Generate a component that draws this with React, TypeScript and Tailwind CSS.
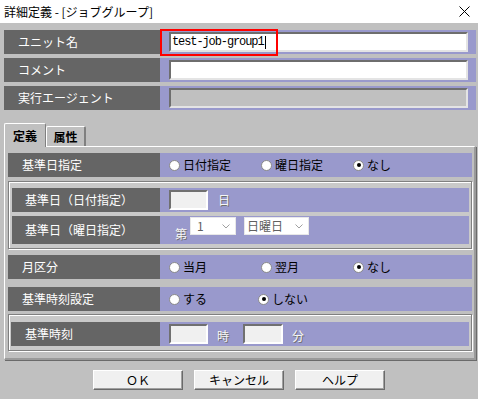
import React from "react";

const Radio = ({ checked }: { checked?: boolean }) => (
  <span className="w-[11px] h-[11px] rounded-full bg-white border border-[#8a8a8a] flex items-center justify-center shrink-0">
    {checked && <span className="w-[4px] h-[4px] rounded-full bg-black" />}
  </span>
);

const Opt = ({ label, checked, w }: { label: string; checked?: boolean; w: string }) => (
  <div className={`flex items-center gap-[3px] ${w}`}>
    <Radio checked={checked} />
    <span className="text-[12px] text-black leading-none">{label}</span>
  </div>
);

const Etched = ({ children }: { children: React.ReactNode }) => (
  <span className="text-[12px] leading-none text-[#f6f6f6] [text-shadow:1px_1px_0_#6f6f6f]">{children}</span>
);

const SmallInput = ({ w }: { w: string }) => (
  <div className={`${w} h-[20px] bg-[#f0f0f0] border-2 border-t-[#707070] border-l-[#707070] border-r-white border-b-white`} />
);

const Chevron = () => (
  <svg width="8" height="5" viewBox="0 0 8 5" className="shrink-0">
    <path d="M0.5 0.5 L4 4 L7.5 0.5" fill="none" stroke="#a0a0a0" strokeWidth="1" />
  </svg>
);

export default function App() {
  return (
    <div className="w-[478px] h-[399px] bg-[#c0c0c0] overflow-hidden font-['Noto_Sans_CJK_JP',sans-serif] select-none">
      {/* title bar */}
      <div className="h-[23px] bg-white flex items-center justify-between pl-[4px] pr-[8px]">
        <span className="text-[12px] text-black leading-none">詳細定義 - [ジョブグループ]</span>
        <svg width="11" height="11" viewBox="0 0 11 11">
          <path d="M0.5 0.5 L10.5 10.5 M10.5 0.5 L0.5 10.5" stroke="#000" strokeWidth="1" />
        </svg>
      </div>

      <div className="pl-[4px] pr-[2px] pt-[7px]">
        {/* top rows */}
        <div className="flex flex-col gap-[4px]">
          <div className="flex h-[24px] relative">
            <div className="w-[156px] bg-[#656565] flex items-center pl-[14px] text-white text-[12px]">ユニット名</div>
            <div className="flex-1 bg-[#9999cc] flex items-center pl-[9px] pr-[8px]">
              <div className="flex-1 h-[20px] bg-white border-2 border-t-[#6e6e6e] border-l-[#6e6e6e] border-r-[#e4e4e4] border-b-[#e4e4e4] flex items-center pl-[1px]">
                <span className="font-['Liberation_Mono',monospace] text-[12px] tracking-[-1.1px] text-black leading-none">test-job-group1</span>
                <span className="w-[1px] h-[13px] bg-black ml-[1px]" />
              </div>
            </div>
            <div className="absolute left-[156px] top-[-1px] w-[118px] h-[27px] border-2 border-[#ff0000]" />
          </div>
          <div className="flex h-[24px]">
            <div className="w-[156px] bg-[#656565] flex items-center pl-[14px] text-white text-[12px]">コメント</div>
            <div className="flex-1 bg-[#9999cc] flex items-center pl-[9px] pr-[8px]">
              <div className="flex-1 h-[20px] bg-white border-2 border-t-[#6e6e6e] border-l-[#6e6e6e] border-r-[#e4e4e4] border-b-[#e4e4e4]" />
            </div>
          </div>
          <div className="flex h-[24px]">
            <div className="w-[156px] bg-[#656565] flex items-center pl-[14px] text-white text-[12px]">実行エージェント</div>
            <div className="flex-1 bg-[#9999cc] flex items-center pl-[9px] pr-[8px]">
              <div className="flex-1 h-[20px] bg-[#c0c0c0] border-2 border-t-[#6e6e6e] border-l-[#6e6e6e] border-r-[#e4e4e4] border-b-[#e4e4e4]" />
            </div>
          </div>
        </div>

        {/* tabs */}
        <div className="flex items-end mt-[13px] h-[23px] relative z-10">
          <div className="w-[42px] h-[24px] mb-[-1px] bg-[#c0c0c0] border-t border-l border-white border-r border-r-[#808080] rounded-t-[2px] flex items-center justify-center text-[12px] font-bold text-black">
            定義
          </div>
          <div className="w-[40px] h-[20px] bg-[#c0c0c0] border-t border-l border-white border-r-2 border-r-[#808080] rounded-t-[2px] flex items-center justify-center text-[12px] font-bold text-black">
            属性
          </div>
        </div>

        {/* panel */}
        <div className="w-[472px] border-t border-l border-white border-r-2 border-b-2 border-r-[#9a9a9a] border-b-[#9a9a9a] shadow-[1px_1px_0_#6a6a6a] pl-[3px] pr-[2px] pt-[6px] pb-[7px] flex flex-col">
          {/* 基準日指定 */}
          <div className="flex h-[24px]">
            <div className="w-[152px] bg-[#656565] flex items-center pl-[14px] text-white text-[12px]">基準日指定</div>
            <div className="flex-1 bg-[#9999cc] flex items-center pl-[9px]">
              <Opt label="日付指定" w="w-[92px]" />
              <Opt label="曜日指定" w="w-[92px]" />
              <Opt label="なし" checked w="w-[60px]" />
            </div>
          </div>

          {/* group box 1 */}
          <div className="mt-[4px] bg-[#c9c9c9] border border-[#808080] shadow-[inset_1px_1px_0_#ffffff,1px_1px_0_#ffffff] pl-[3px] pr-[2px] pt-[6px] pb-[4px] flex flex-col gap-[4px]">
            <div className="flex h-[24px]">
              <div className="w-[148px] bg-[#656565] flex items-center pl-[13px] text-white text-[12px]">基準日（日付指定）</div>
              <div className="flex-1 bg-[#9999cc] flex items-center pl-[9px] gap-[10px]">
                <SmallInput w="w-[39px]" />
                <Etched>日</Etched>
              </div>
            </div>
            <div className="flex h-[28px]">
              <div className="w-[148px] bg-[#656565] flex items-center pl-[13px] text-white text-[12px]">基準日（曜日指定）</div>
              <div className="flex-1 bg-[#9999cc] flex items-start pl-[15px] pt-[1px]">
                <div className="mt-[7px] mr-[3px] leading-none">
                  <Etched>第</Etched>
                </div>
                <div className="w-[46px] h-[18px] bg-white border border-[#e8e8e8] flex items-center justify-between pl-[6px] pr-[5px]">
                  <span className="text-[12px] leading-none text-[#606060]">1</span>
                  <Chevron />
                </div>
                <div className="ml-[8px] w-[65px] h-[18px] bg-white border border-[#e8e8e8] flex items-center justify-between pl-[2px] pr-[5px]">
                  <span className="text-[12px] leading-none text-[#606060]">日曜日</span>
                  <Chevron />
                </div>
              </div>
            </div>
          </div>

          {/* 月区分 */}
          <div className="flex h-[24px] mt-[6px]">
            <div className="w-[152px] bg-[#656565] flex items-center pl-[14px] text-white text-[12px]">月区分</div>
            <div className="flex-1 bg-[#9999cc] flex items-center pl-[9px]">
              <Opt label="当月" w="w-[92px]" />
              <Opt label="翌月" w="w-[92px]" />
              <Opt label="なし" checked w="w-[60px]" />
            </div>
          </div>

          {/* 基準時刻設定 */}
          <div className="flex h-[24px] mt-[8px]">
            <div className="w-[152px] bg-[#656565] flex items-center pl-[14px] text-white text-[12px]">基準時刻設定</div>
            <div className="flex-1 bg-[#9999cc] flex items-center pl-[9px]">
              <Opt label="する" w="w-[89px]" />
              <Opt label="しない" checked w="w-[80px]" />
            </div>
          </div>

          {/* group box 2 */}
          <div className="mt-[3px] bg-[#c9c9c9] border border-[#808080] shadow-[inset_1px_1px_0_#ffffff,1px_1px_0_#ffffff] pl-[2px] pr-[2px] pt-[7px] pb-[4px] flex flex-col">
            <div className="flex h-[24px]">
              <div className="w-[149px] bg-[#656565] flex items-center pl-[14px] text-white text-[12px]">基準時刻</div>
              <div className="flex-1 bg-[#9999cc] flex items-center pl-[9px]">
                <SmallInput w="w-[39px]" />
                <span className="ml-[9px] mr-[14px]"><Etched>時</Etched></span>
                <SmallInput w="w-[40px]" />
                <span className="ml-[9px]"><Etched>分</Etched></span>
              </div>
            </div>
          </div>
        </div>

        {/* buttons */}
        <div className="flex justify-center gap-[11px] mt-[10px] pr-[2px]">
          {["ＯＫ", "キャンセル", "ヘルプ"].map((t) => (
            <div
              key={t}
              className="w-[90px] h-[20px] bg-[#f0f0f0] border border-t-white border-l-white border-r-[#6a6a6a] border-b-[#6a6a6a] shadow-[inset_-1px_-1px_0_#a0a0a0] flex items-center justify-center text-[12px] text-black leading-none"
            >
              {t}
            </div>
          ))}
        </div>
      </div>
    </div>
  );
}
